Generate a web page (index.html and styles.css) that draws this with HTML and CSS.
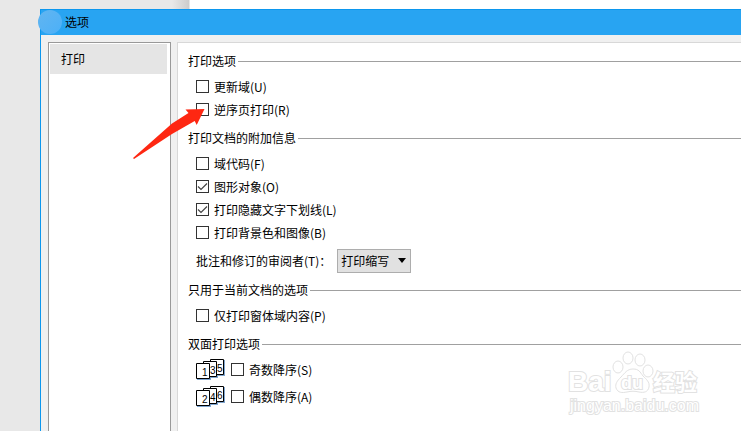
FILE: index.html
```html
<!DOCTYPE html>
<html lang="zh-CN">
<head>
    <meta charset="UTF-8">
    <meta name="viewport" content="width=device-width, initial-scale=1.0">
    <title>选项</title>
    <link rel="stylesheet" href="styles.css">
</head>
<body>
    <div class="dialog">
        <header class="title-bar">
            <span class="app-badge"></span>
            <span>选项</span>
        </header>
        <div class="dialog-body">
            <nav class="sidebar">
                <button type="button" class="tab">打印</button>
            </nav>
            <main class="panel">
                <fieldset>
                    <legend>打印选项</legend>
                    <label class="option"><input type="checkbox">更新域(U)</label>
                    <label class="option"><input type="checkbox">逆序页打印(R)</label>
                </fieldset>
                <fieldset>
                    <legend>打印文档的附加信息</legend>
                    <label class="option"><input type="checkbox">域代码(F)</label>
                    <label class="option"><input type="checkbox" checked>图形对象(O)</label>
                    <label class="option"><input type="checkbox" checked>打印隐藏文字下划线(L)</label>
                    <label class="option"><input type="checkbox">打印背景色和图像(B)</label>
                    <div class="reviewer">
                        <label for="reviewer">批注和修订的审阅者(T)：</label>
                        <span class="select-box">
                            <select id="reviewer">
                                <option>打印缩写</option>
                            </select>
                        </span>
                    </div>
                </fieldset>
                <fieldset>
                    <legend>只用于当前文档的选项</legend>
                    <label class="option"><input type="checkbox">仅打印窗体域内容(P)</label>
                </fieldset>
                <fieldset class="duplex">
                    <legend>双面打印选项</legend>
                    <div class="duplex-row">
                        <svg class="pages" width="29" height="21" viewBox="0 0 29 21" aria-hidden="true">
                            <path class="page-shadow" d="M1 5h14v16H1zM8 3h14v16H8zM15 1h14v16H15z"/>
                            <path class="page" d="M14.500 .5h13v15h-13z"/>
                            <path class="page" d="M7.500 2.500h13v15h-13z"/>
                            <path class="page" d="M.5 4.500h13v15H.5z"/>
                            <text x="6" y="17">1</text>
                            <text x="14" y="15">3</text>
                            <text x="21" y="13">5</text>
                        </svg>
                        <label class="option"><input type="checkbox">奇数降序(S)</label>
                    </div>
                    <div class="duplex-row">
                        <svg class="pages" width="29" height="21" viewBox="0 0 29 21" aria-hidden="true">
                            <path class="page-shadow" d="M1 5h14v16H1zM8 3h14v16H8zM15 1h14v16H15z"/>
                            <path class="page" d="M14.500 .5h13v15h-13z"/>
                            <path class="page" d="M7.500 2.500h13v15h-13z"/>
                            <path class="page" d="M.5 4.500h13v15H.5z"/>
                            <text x="6" y="17">2</text>
                            <text x="14" y="15">4</text>
                            <text x="21" y="13">6</text>
                        </svg>
                        <label class="option"><input type="checkbox">偶数降序(A)</label>
                    </div>
                </fieldset>
            </main>
        </div>
    </div>

    <svg class="arrow" width="74" height="53" viewBox="0 0 74 53" aria-hidden="true">
        <path d="M0 51L39 16.500L55.500 6L52.500 2.500L71.500 2L63.700 18L61.700 14L39 27L1 52z"/>
    </svg>

    <svg class="watermark" width="136" height="66" viewBox="0 0 136 66" aria-hidden="true">
        <text class="brand" x="1" y="40">Bai</text>
        <ellipse cx="51" cy="16" rx="5" ry="6"/>
        <ellipse cx="61" cy="7" rx="5" ry="6"/>
        <ellipse cx="73" cy="9" rx="5" ry="6"/>
        <ellipse cx="81" cy="20" rx="5" ry="6"/>
        <path d="M66 18C60 18 58 22 54 26C50 30 48 33 49 37C51 42 55 42 60 41C64 40 68 40 72 41C77 42 81 41 82 36C83 31 79 28 76 25C73 21 72 18 66 18z"/>
        <text class="du" x="54" y="38">du</text>
        <text class="cn" x="86" y="39">经验</text>
        <text class="site" x="3" y="60">jingyan.baidu.com</text>
    </svg>
</body>
</html>
```

FILE: styles.css
```css
* {
    box-sizing: border-box;
}
body {
    position: relative;
    display: flex;
    min-height: 100vh;
    margin: 0;
    padding: 9px 0 0 40px;
    overflow: hidden;
    background: linear-gradient(to right, #e8e8e8 172px, #cccccc 189px, #ffffff 190px);
    color: #000000;
    font-family: "Noto Sans CJK SC", sans-serif;
    font-size: 12px;
    line-height: 18px;
}
.dialog {
    display: flex;
    flex: 1;
    flex-direction: column;
    border-top: 1px solid #0c97ee;
    border-left: 1px solid #0c97ee;
    background-color: #f0f0f0;
}
.title-bar {
    position: relative;
    height: 25px;
    padding: 3px 24px;
    background-color: #28a4f2;
}
.app-badge {
    position: absolute;
    top: 0;
    left: -3px;
    width: 24px;
    height: 24px;
    border-radius: 50%;
    background: linear-gradient(135deg, #62b5f0, #4bb0f8);
}
.dialog-body {
    display: flex;
    flex: 1;
    gap: 6px;
    padding: 7px 0 0 7px;
}
.sidebar {
    width: 123px;
    padding: 1px 3px 0 1px;
    border: 1px solid #999999;
    border-bottom: 0;
    background-color: #ffffff;
}
.tab {
    display: block;
    width: 100%;
    height: 30px;
    padding: 0 11px;
    border: 0;
    background-color: #e5e5e5;
    color: inherit;
    font: inherit;
    text-align: left;
}
.panel {
    flex: 1;
    min-width: 0;
    padding: 9px 0 0 10px;
    border-top: 1px solid #d8d8d8;
    border-left: 1px solid #d8d8d8;
    background-color: #ffffff;
}
fieldset {
    min-width: 0;
    margin: 0 0 8px;
    padding: 5px 0 0 8px;
    border: 0;
    border-top: 1px solid #a0a0a0;
}
legend {
    margin-left: -8px;
    padding: 0 2px 0 0;
}
.option {
    display: flex;
    align-items: center;
    gap: 5px;
    width: fit-content;
    height: 23px;
}
input[type="checkbox"] {
    appearance: none;
    width: 13px;
    height: 13px;
    margin: 0;
    border: 1px solid #333333;
    background: #ffffff;
}
input[type="checkbox"]:checked {
    background: #ffffff url("data:image/svg+xml,%3Csvg xmlns='http://www.w3.org/2000/svg' viewBox='0 0 11 11'%3E%3Cpath d='M1 5.500L4 8.500L10 2.500' fill='none' stroke='%23444' stroke-width='1.200'/%3E%3C/svg%3E");
}
.reviewer {
    display: flex;
    align-items: center;
    gap: 6px;
    margin-top: 5px;
}
.select-box {
    position: relative;
}
.select-box::after {
    content: "";
    position: absolute;
    top: 9px;
    right: 5px;
    border: 4px solid transparent;
    border-top: 5px solid #000000;
    border-bottom: 0;
    pointer-events: none;
}
select {
    display: block;
    appearance: none;
    width: 74px;
    height: 24px;
    padding: 0 3px;
    border: 1px solid #adadad;
    border-radius: 0;
    background-color: #e1e1e1;
    color: inherit;
    font: inherit;
}
.duplex {
    padding-top: 3px;
}
.duplex-row {
    display: flex;
    align-items: center;
    gap: 6px;
    height: 27px;
}
.page-shadow {
    fill: #7fa5cf;
}
.page {
    fill: #ffffff;
    stroke: #000000;
}
.pages text {
    font: 10px "Liberation Sans", sans-serif;
}
.arrow {
    position: absolute;
    top: 107px;
    left: 133px;
    fill: #fe2712;
}
.watermark {
    position: absolute;
    right: 38px;
    bottom: 14px;
    fill: #ffffff;
    stroke: #e2e2e2;
}
.watermark text {
    paint-order: stroke;
    stroke-width: 2px;
}
.brand {
    font: bold 28px "Liberation Sans", sans-serif;
}
.du {
    font: bold 18px "Liberation Sans", sans-serif;
}
.cn {
    font: bold 22px "Noto Sans CJK SC", sans-serif;
}
.site {
    font: 16px "Liberation Sans", sans-serif;
}
```
